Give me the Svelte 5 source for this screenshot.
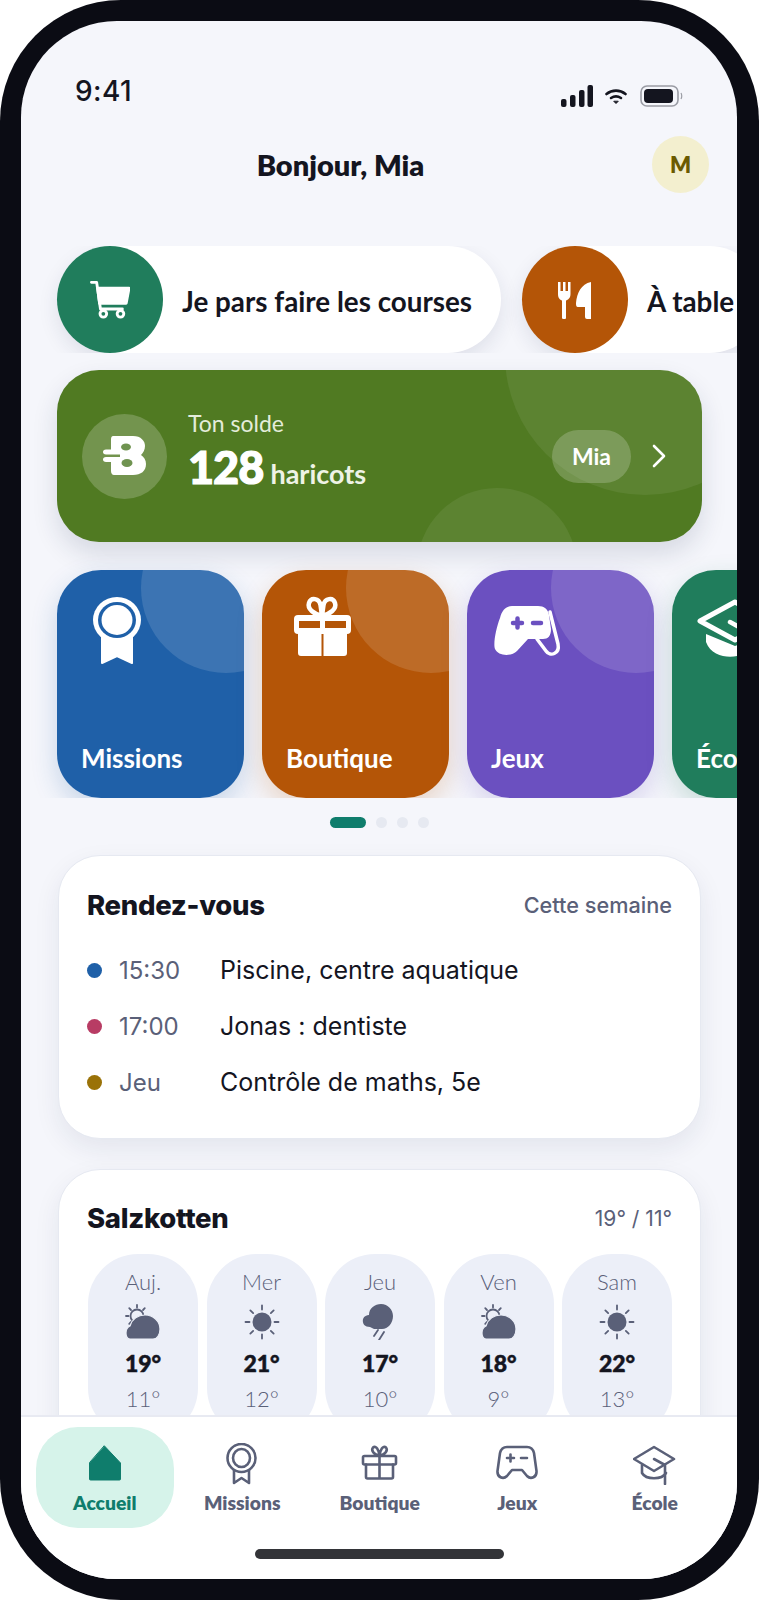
<script>
  const tiles = [
    { name: 'ribbon', label: 'Missions', color: '#1f60a8', shadow: '31,96,168' },
    { name: 'gift', label: 'Boutique', color: '#b45507', shadow: '180,85,7' },
    { name: 'pad', label: 'Jeux', color: '#6b50c0', shadow: '107,80,192' },
    { name: 'cap', label: 'École', color: '#207d5c', shadow: '32,125,92' }
  ];

  const events = [
    { color: '#1f60a8', time: '15:30', text: 'Piscine, centre aquatique' },
    { color: '#b83c64', time: '17:00', text: 'Jonas : dentiste' },
    { color: '#9a7208', time: 'Jeu', text: 'Contrôle de maths, 5e' }
  ];

  const days = [
    { day: 'Auj.', icon: 'partly', hi: '19°', lo: '11°' },
    { day: 'Mer', icon: 'sun', hi: '21°', lo: '12°' },
    { day: 'Jeu', icon: 'rain', hi: '17°', lo: '10°' },
    { day: 'Ven', icon: 'partly', hi: '18°', lo: '9°' },
    { day: 'Sam', icon: 'sun', hi: '22°', lo: '13°' }
  ];

  const navItems = [
    { name: 'home', label: 'Accueil', active: true },
    { name: 'ribbon', label: 'Missions' },
    { name: 'gift', label: 'Boutique' },
    { name: 'pad', label: 'Jeux' },
    { name: 'cap', label: 'École' }
  ];

  const rays = [0, 45, 90, 135, 180, 225, 270, 315];
</script>

{#snippet tileIcon(name, color)}
  <svg class="tile-icon" viewBox="0 0 72 72" width="72" height="72">
    {#if name === 'ribbon'}
      <path d="M20 40 V69 L35 62 L50 69 V40 Z" fill="#fff" stroke="#fff" stroke-width="2" stroke-linejoin="round" />
      <ellipse cx="35" cy="26" rx="24" ry="23" fill="#fff" />
      <ellipse cx="35" cy="26" rx="19" ry="18" fill={color} />
      <ellipse cx="35" cy="26" rx="15.5" ry="15" fill="#fff" />
    {:else if name === 'gift'}
      <path d="M35 22 C27 20 20 15 22 9 C24 3 32 4 33.5 11 L35 22 L36.5 11 C38 4 46 3 48 9 C50 15 43 20 35 22" fill="none" stroke="#fff" stroke-width="4.5" stroke-linejoin="round" />
      <rect x="7" y="21" width="57" height="19" rx="4" fill="#fff" />
      <rect x="12" y="27" width="21" height="7" fill={color} />
      <rect x="38" y="27" width="21" height="7" fill={color} />
      <path d="M11 40 H34.5 V62 H14 Q11 62 11 59 Z M36.5 40 H60 V59 Q60 62 57 62 H36.5 Z" fill="#fff" />
    {:else if name === 'pad'}
      <path d="M20 12 H46 C52 12 56 15 57 21 L59 35 C59 42 56 45 51 45 H36 L25 57 C19 63 6 62 3 55 C1 50 4 34 8 24 C10 16 14 12 20 12 Z" fill="#fff" />
      <path d="M58 18 L66 50 C68 60 58 63 54 57 L45 45" fill="none" stroke="#fff" stroke-width="3.5" stroke-linecap="round" />
      <path d="M21 29 H30 M25.5 24.5 V33.5 M41 29 H49" stroke={color} stroke-width="4.5" stroke-linecap="round" />
    {:else}
      <path d="M9 40 V48 C14 62 30 64 40 62 C56 62 64 56 66 48 V40 L38 52 Z" fill="#fff" />
      <path d="M3 27 L38 8 L73 27 L38 46 Z" fill="none" stroke="#fff" stroke-width="5" stroke-linejoin="round" />
      <path d="M33 28 L42 33" stroke="#fff" stroke-width="4.5" stroke-linecap="round" />
    {/if}
  </svg>
{/snippet}

{#snippet navIcon(name)}
  <svg viewBox="0 0 44 42" width="44" height="42" fill="none" stroke="#5a6078" stroke-width="2.6" stroke-linecap="round" stroke-linejoin="round">
    {#if name === 'home'}
      <path d="M22 3 L38 20 V36 Q38 37 37 37 H8 Q7 37 7 36 V20 Z" transform="translate(-0.5 0)" fill="#0f7d6c" stroke="#0f7d6c" stroke-width="1" />
    {:else if name === 'ribbon'}
      <ellipse cx="21.5" cy="15" rx="14" ry="14" />
      <ellipse cx="21.5" cy="15" rx="8.5" ry="9" />
      <path d="M14 27 V40 L21.5 35 L29 40 V27" />
    {:else if name === 'gift'}
      <rect x="5" y="13" width="33" height="8.5" rx="1.5" />
      <path d="M8 21.5 V34 Q8 35.5 9.5 35.5 H33.5 Q35 35.5 35 34 V21.5 M21.5 13 V35.5" />
      <path d="M21.5 13 C15 11 13 7 15 4.5 C18 2 21 7 21.5 13 C22 7 25 2 28 4.5 C30 7 28 11 21.5 13 Z" />
    {:else if name === 'pad'}
      <path d="M12 4 H32 C36 4 38 6 39 10 L41.5 28 C42 34 36 37 32 33 L27 27 H17 L12 33 C8 37 2 34 2.5 28 L5 10 C6 6 8 4 12 4 Z" />
      <path d="M12 15 H19 M15.5 11.5 V18.5 M26 15 H32" />
    {:else}
      <path d="M21 3 L41 15 L21 27 L1 15 Z" transform="translate(0 1)" />
      <path d="M9 22 V30 C13 37 29 37 33 30" />
      <path d="M21 16 L32 22 V41" />
    {/if}
  </svg>
{/snippet}

{#snippet weatherIcon(name)}
  <svg viewBox="0 0 36 36" width="36" height="36" fill="#5a6078" stroke="#5a6078">
    {#if name === 'sun'}
      <circle cx="18" cy="18" r="9.5" stroke="none" />
      {#each rays as r}
        <path d="M18 1.5 V5.5" stroke-width="1.8" stroke-linecap="round" transform="rotate({r} 18 18)" />
      {/each}
    {:else if name === 'partly'}
      <circle cx="12" cy="12" r="6.5" fill="none" stroke-width="1.8" />
      {#each rays as r}
        <path d="M12 1 V3.5" stroke-width="1.8" stroke-linecap="round" transform="rotate({r} 12 12)" />
      {/each}
      <path d="M5 35 C2 35 1 32 1 29 C1 25 3 23 5 22 C7 15 13 11 20 11 C28 11 35 17 35 25 C35 31 32 35 28 35 Z" stroke="#eceff8" stroke-width="1.2" />
    {:else}
      <path d="M8 23 C3 23 0 20 1 15 C2 12 5 11 7 11 C7 4 13 0 19 0 C26 0 31 6 31 12 C31 19 26 25 20 25 L12 25 Z" stroke="none" />
      <path d="M16 26 L12 32 M22 28 L17 36" stroke-width="1.8" stroke-linecap="round" fill="none" />
    {/if}
  </svg>
{/snippet}

<div class="phone">
  <div class="screen">
    <div class="content">
      <div class="status">
        <span class="clock">9:41</span>
        <div class="status-icons">
          <svg viewBox="0 0 32 22" width="32" height="22" fill="#14151f">
            <rect x="0" y="14" width="5.5" height="8" rx="2" />
            <rect x="9" y="10" width="5.5" height="12" rx="2" />
            <rect x="18" y="5" width="5.5" height="17" rx="2" />
            <rect x="26.5" y="0" width="5.5" height="22" rx="2" />
          </svg>
          <svg viewBox="0 0 22 15" width="22" height="15" fill="none" stroke="#14151f" stroke-width="2.6" stroke-linecap="round">
            <path d="M1.5 5 C7 0.5 15 0.5 20.5 5" />
            <path d="M6 9 C9 7 13 7 16 9" />
            <path d="M9 12.5 L11 14.5 L13 12.5 Z" fill="#14151f" stroke-width="1" stroke-linejoin="round" />
          </svg>
          <svg class="batt" viewBox="0 0 43 22" width="43" height="22">
            <rect x="1" y="1" width="37" height="20" rx="6" fill="none" stroke="#9a9ca4" stroke-width="1.6" />
            <rect x="4" y="4" width="29" height="14" rx="4" fill="#14151f" />
            <path d="M41 8 Q42.5 11 41 14" fill="none" stroke="#9a9ca4" stroke-width="1.2" />
          </svg>
        </div>
      </div>

      <header class="top">
        <h1>Bonjour, Mia</h1>
        <div class="avatar">M</div>
      </header>

      <div class="quick">
        <div class="pill">
          <div class="pill-icon green">
            <svg viewBox="0 0 42 40" width="40" height="39" fill="none" stroke="#fff" stroke-width="3" stroke-linecap="round" stroke-linejoin="round">
              <path d="M1.5 2 H7 L11 30 H34" />
              <path d="M8 8 H41 L38 24 H10 Z" fill="#fff" />
              <circle cx="14" cy="35" r="3.5" />
              <circle cx="32" cy="35" r="3.5" />
            </svg>
          </div>
          <span>Je pars faire les courses</span>
        </div>
        <div class="pill">
          <div class="pill-icon orange">
            <svg viewBox="0 0 36 38" width="36" height="38" fill="#fff">
              <path d="M1 1 H3.5 V10 H6 V1 H8.5 V10 H11 V1 H13.5 V13 C13.5 17 11 19 9 19.5 V37 Q9 38 8 38 H6.5 Q5 38 5 37 V19.5 C3 19 1 17 1 13 Z" />
              <path d="M34 1 V38 H30 Q28 38 28 36 V26 H21 C19 26 19 24 19 22 C20 12 24 3 34 1 Z" />
            </svg>
          </div>
          <span>À table</span>
        </div>
      </div>

      <div class="balance">
        <div class="deco deco-a"></div>
        <div class="deco deco-b"></div>
        <div class="bean">
          <svg viewBox="0 0 43 40" width="43" height="40">
            <path d="M10 0 H30 C38 0 42 5 42 10 C42 14 40 17 38 19 C41 21 43 24 43 28 C43 35 38 39 30 39 H11 C9 39 8 37 8 35 V26 H3 C1 26 0 25 0 23.5 C0 22 1 21 3 21 H17 V18.5 H3 C1 18.5 0 17.5 0 16 C0 14.5 1 13.5 3 13.5 H8 V3 C8 1 9 0 10 0 Z" fill="#fff" />
            <ellipse cx="23" cy="11" rx="5" ry="3.5" fill="#6f9350" />
            <ellipse cx="24" cy="27" rx="5.5" ry="4" fill="#6f9350" />
          </svg>
        </div>
        <div class="solde">
          <div class="solde-label">Ton solde</div>
          <div class="solde-value"><b>128</b> <span>haricots</span></div>
        </div>
        <div class="who">Mia</div>
        <svg class="chev" viewBox="0 0 14 24" width="14" height="24" fill="none" stroke="#fff" stroke-width="2.6" stroke-linecap="round" stroke-linejoin="round">
          <path d="M2 2 L12 12 L2 22" />
        </svg>
      </div>

      <div class="tiles">
        {#each tiles as t}
          <div class="tile" style="background:{t.color};box-shadow:0 10px 26px rgba({t.shadow},.22)">
            <div class="tile-deco"></div>
            {@render tileIcon(t.name, t.color)}
            <div class="tile-label">{t.label}</div>
          </div>
        {/each}
      </div>

      <div class="dots">
        <i class="on"></i><i></i><i></i><i></i>
      </div>

      <section class="card rdv">
        <div class="card-head">
          <h2>Rendez-vous</h2>
          <span>Cette semaine</span>
        </div>
        <div class="events">
          {#each events as e}
            <div class="event">
              <i style="background:{e.color}"></i>
              <span class="time">{e.time}</span>
              <span class="what">{e.text}</span>
            </div>
          {/each}
        </div>
      </section>

      <section class="card meteo">
        <div class="card-head">
          <h2>Salzkotten</h2>
          <span class="range">19° / 11°</span>
        </div>
        <div class="days">
          {#each days as d}
            <div class="day">
              <div class="day-name">{d.day}</div>
              <div class="day-icon">{@render weatherIcon(d.icon)}</div>
              <div class="day-hi">{d.hi}</div>
              <div class="day-lo">{d.lo}</div>
            </div>
          {/each}
        </div>
      </section>
    </div>

    <nav class="nav">
      <div class="nav-row">
        {#each navItems as n}
          <div class="nav-item" class:active={n.active}>
            {@render navIcon(n.name)}
            <span>{n.label}</span>
          </div>
        {/each}
      </div>
      <div class="home-bar"></div>
    </nav>
  </div>
</div>

<style>
  :global(body) {
    margin: 0;
    background: #fff;
  }

  .phone {
    width: 759px;
    height: 1600px;
    box-sizing: border-box;
    padding: 21px 22px 21px 21px;
    background: #0b0c14;
    border-radius: 121px;
    font-family: "Inter", sans-serif;
    color: #14151f;
  }

  .screen {
    height: 100%;
    display: flex;
    flex-direction: column;
    overflow: hidden;
    border-radius: 96px;
    background: #f5f6fb;
  }

  .content {
    flex: 1;
    min-height: 0;
    overflow: hidden;
  }

  .status {
    height: 115px;
    box-sizing: border-box;
    padding: 54px 54px 0 54px;
    display: flex;
    justify-content: space-between;
    align-items: flex-start;
  }

  .clock {
    font-size: 28px;
    line-height: 32px;
    font-weight: 500;
    letter-spacing: 0.4px;
  }

  .status-icons {
    display: flex;
    align-items: center;
    gap: 12px;
    padding-top: 10px;
  }

  .batt {
    margin-left: 1px;
  }

  .top {
    display: flex;
    align-items: center;
    height: 57px;
    padding: 0 28px 0 8px;
  }

  h1 {
    flex: 1;
    margin: 0;
    text-align: center;
    font-family: "Lato", sans-serif;
    font-size: 29px;
    font-weight: 800;
  }

  .avatar {
    width: 57px;
    height: 57px;
    border-radius: 50%;
    background: #f3efcf;
    color: #6b5a00;
    display: flex;
    align-items: center;
    justify-content: center;
    font-family: "Lato", sans-serif;
    font-size: 22px;
    font-weight: 800;
  }

  .quick {
    margin-top: 53px;
    height: 107px;
    padding-left: 36px;
    display: flex;
    gap: 21px;
    overflow: hidden;
  }

  .pill {
    flex: none;
    height: 107px;
    display: flex;
    align-items: center;
    gap: 19px;
    padding-right: 29px;
    background: #fff;
    border-radius: 54px;
    box-shadow: 0 8px 20px rgba(30, 40, 80, 0.1);
    font-family: "Lato", sans-serif;
    font-size: 27.8px;
    font-weight: 700;
  }

  .pill span {
    padding-top: 3px;
  }

  .pill-icon {
    width: 106px;
    height: 107px;
    border-radius: 50%;
    display: flex;
    align-items: center;
    justify-content: center;
  }

  .green { background: #207d5c; }
  .orange { background: #b45507; }

  .balance {
    position: relative;
    overflow: hidden;
    margin: 17px 35px 0 36px;
    height: 172px;
    padding-left: 25px;
    display: flex;
    align-items: center;
    background: #507a22;
    border-radius: 42px;
    box-shadow: 0 12px 26px rgba(30, 40, 80, 0.14);
  }

  .deco {
    position: absolute;
    border-radius: 50%;
    background: rgba(255, 255, 255, 0.07);
  }

  .deco-a {
    width: 280px;
    height: 280px;
    left: 448px;
    top: -155px;
  }

  .deco-b {
    width: 160px;
    height: 160px;
    left: 360px;
    top: 118px;
  }

  .bean {
    flex: none;
    width: 85px;
    height: 85px;
    border-radius: 50%;
    background: rgba(255, 255, 255, 0.2);
    display: flex;
    align-items: center;
    justify-content: center;
  }

  .solde {
    position: relative;
    flex: 1;
    margin-left: 21px;
    color: #fff;
    font-family: "Lato", sans-serif;
  }

  .solde-label {
    margin-bottom: 6px;
    font-size: 23px;
    line-height: 26px;
    color: #e4ecda;
  }

  .solde-value {
    line-height: 50px;
    white-space: nowrap;
  }

  .solde-value b {
    font-size: 45px;
    font-weight: 900;
    letter-spacing: -1px;
    -webkit-text-stroke: 1.2px #fff;
  }

  .solde-value span {
    margin-left: 3px;
    font-size: 27px;
    font-weight: 700;
    color: #eef3e6;
  }

  .who {
    position: relative;
    width: 79px;
    height: 53px;
    border-radius: 27px;
    background: rgba(255, 255, 255, 0.2);
    color: #fff;
    display: flex;
    align-items: center;
    justify-content: center;
    font-family: "Lato", sans-serif;
    font-size: 23px;
    font-weight: 700;
  }

  .chev {
    position: relative;
    margin: 0 36px 0 21px;
  }

  .tiles {
    margin-top: 8px;
    padding: 20px 0 0 36px;
    height: 228px;
    display: flex;
    gap: 18px;
    overflow: hidden;
  }

  .tile {
    position: relative;
    overflow: hidden;
    flex: none;
    width: 187px;
    height: 228px;
    box-sizing: border-box;
    padding: 24px 0 25px 24px;
    display: flex;
    flex-direction: column;
    justify-content: space-between;
    border-radius: 44px;
  }

  .tile-deco {
    position: absolute;
    left: 84px;
    top: -67px;
    width: 170px;
    height: 170px;
    border-radius: 50%;
    background: rgba(255, 255, 255, 0.13);
  }

  .tile-icon {
    position: relative;
    margin-left: 1px;
    overflow: visible;
  }

  .tile-label {
    color: #fff;
    font-family: "Lato", sans-serif;
    font-size: 26px;
    line-height: 30px;
    font-weight: 700;
    white-space: nowrap;
  }

  .dots {
    margin-top: 19px;
    height: 11px;
    display: flex;
    justify-content: center;
    gap: 10px;
  }

  .dots i {
    width: 11px;
    height: 11px;
    border-radius: 50%;
    background: #e6e9f1;
  }

  .dots i.on {
    width: 36px;
    border-radius: 6px;
    background: #0f7d6c;
  }

  .card {
    margin: 27px 36px 0 37px;
    box-sizing: border-box;
    padding: 33px 28px 0;
    background: #fff;
    border: 1px solid #e6e9f1;
    border-radius: 42px;
    box-shadow: 0 10px 26px rgba(30, 40, 80, 0.08);
  }

  .rdv {
    height: 284px;
  }

  .meteo {
    margin-top: 30px;
    height: 300px;
    padding-top: 32px;
  }

  .card-head {
    display: flex;
    justify-content: space-between;
    align-items: center;
    height: 32px;
  }

  h2 {
    margin: 0;
    font-size: 27.5px;
    font-weight: 800;
    letter-spacing: -0.3px;
  }

  .card-head span {
    font-size: 21.7px;
    font-weight: 500;
    color: #5a6078;
  }

  .card-head .range {
    font-size: 21px;
    font-weight: 400;
  }

  .events {
    margin-top: 21px;
  }

  .event {
    height: 56px;
    display: flex;
    align-items: center;
    font-size: 25px;
  }

  .event i {
    width: 15px;
    height: 15px;
    border-radius: 50%;
  }

  .time {
    width: 101px;
    margin-left: 17px;
    font-size: 24px;
    color: #5a6078;
  }

  .days {
    margin: 20px 0 0 1px;
    display: flex;
    justify-content: space-between;
  }

  .day {
    width: 110px;
    height: 184px;
    box-sizing: border-box;
    padding-top: 16px;
    border-radius: 50px;
    background: #eceff8;
    display: flex;
    flex-direction: column;
    align-items: center;
    font-family: "Lato", sans-serif;
    font-size: 22px;
    color: #5a6078;
  }

  .day-name {
    line-height: 24px;
    font-weight: 300;
  }

  .day-icon {
    margin-top: 10px;
    height: 36px;
  }

  .day-hi {
    margin-top: 10px;
    line-height: 26px;
    font-weight: 900;
    font-size: 23px;
    color: #14151f;
    -webkit-text-stroke: 0.5px #14151f;
  }

  .day-lo {
    margin-top: 10px;
    line-height: 26px;
    font-weight: 300;
  }

  .nav {
    flex: none;
    height: 164px;
    box-sizing: border-box;
    padding: 10px 14px 0 15px;
    background: #fff;
    border-top: 2px solid #e8eaf2;
    display: flex;
    flex-direction: column;
    align-items: center;
  }

  .nav-row {
    display: flex;
    align-self: stretch;
  }

  .nav-item {
    flex: none;
    width: 137.5px;
    height: 101px;
    box-sizing: border-box;
    padding-top: 16px;
    display: flex;
    flex-direction: column;
    align-items: center;
    gap: 6px;
    border-radius: 42px;
    font-family: "Lato", sans-serif;
    font-size: 19.3px;
    font-weight: 800;
    color: #5a6078;
  }

  .nav-item.active {
    background: #d6f3ea;
    color: #0f7d6c;
  }

  .home-bar {
    margin-top: 21px;
    width: 249px;
    height: 10px;
    border-radius: 5px;
    background: #333438;
  }
</style>
